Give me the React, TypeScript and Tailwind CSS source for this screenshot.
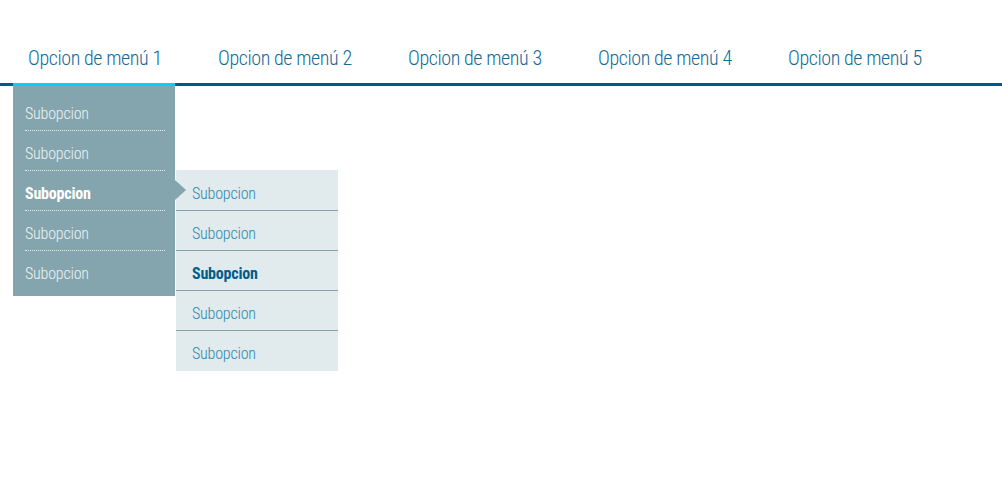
import React from 'react';

const tabs = ['Opcion de menú 1', 'Opcion de menú 2', 'Opcion de menú 3', 'Opcion de menú 4', 'Opcion de menú 5'];
const subItems = ['Subopcion', 'Subopcion', 'Subopcion', 'Subopcion', 'Subopcion'];

const font = "font-['Roboto_Condensed','Roboto',sans-serif] [font-stretch:condensed]";

const SubMenu: React.FC = () => (
  <div className="absolute left-[163px] -top-[1px] w-[162px] bg-[#e1eaec] pt-[1px]">
    <div className="absolute -left-[1px] top-[10px] h-0 w-0 border-y-[10.5px] border-l-[11px] border-y-transparent border-l-[#84a5ae]" />
    {subItems.map((label, i) => (
      <div
        key={i}
        className={`h-10 pl-4 pt-[13px] text-[16px] leading-5 tracking-[-0.2px] ${
          i < subItems.length - 1 ? 'border-b border-[#84a5ae]' : ''
        } ${i === 2 ? 'font-bold text-[#005d8c]' : 'font-light text-[#2c87ae]'}`}
      >
        {label}
      </div>
    ))}
  </div>
);

// sits just under the active tab's border
const Dropdown: React.FC = () => (
  <div className="absolute left-0 top-[calc(100%+3px)] w-[162px] bg-[#84a5ae] pb-[5px] pt-[5px]">
    {subItems.map((label, i) => (
      <div key={i} className="relative pl-3 pr-[10px]">
        <div
          className={`h-10 pt-[13px] text-[16px] leading-5 tracking-[-0.2px] ${
            i < subItems.length - 1 ? 'border-b border-dotted border-[#e4ecee]' : ''
          } ${i === 2 ? 'font-bold text-white' : 'font-light text-[#eef3f4]'}`}
        >
          {label}
        </div>
        {i === 2 && <SubMenu />}
      </div>
    ))}
  </div>
);

export default function App() {
  return (
    <div className={`h-[500px] w-full bg-white ${font}`}>
      <nav className="border-b-[3px] border-[#005b8a]">
        <ul className="flex gap-[28px] pl-[13px]">
          {tabs.map((tab, i) => (
            <li
              key={tab}
              className={`relative w-[162px] ${i === 0 ? '-mb-[3px] border-b-[3px] border-[#00d2f3]' : ''}`}
            >
              <a className="block whitespace-nowrap px-[15px] pb-[13px] pt-[46px] text-[20px] font-light leading-6 tracking-[-0.4px] text-[#126a98]">
                {tab}
              </a>
              {i === 0 && <Dropdown />}
            </li>
          ))}
        </ul>
      </nav>
    </div>
  );
}
